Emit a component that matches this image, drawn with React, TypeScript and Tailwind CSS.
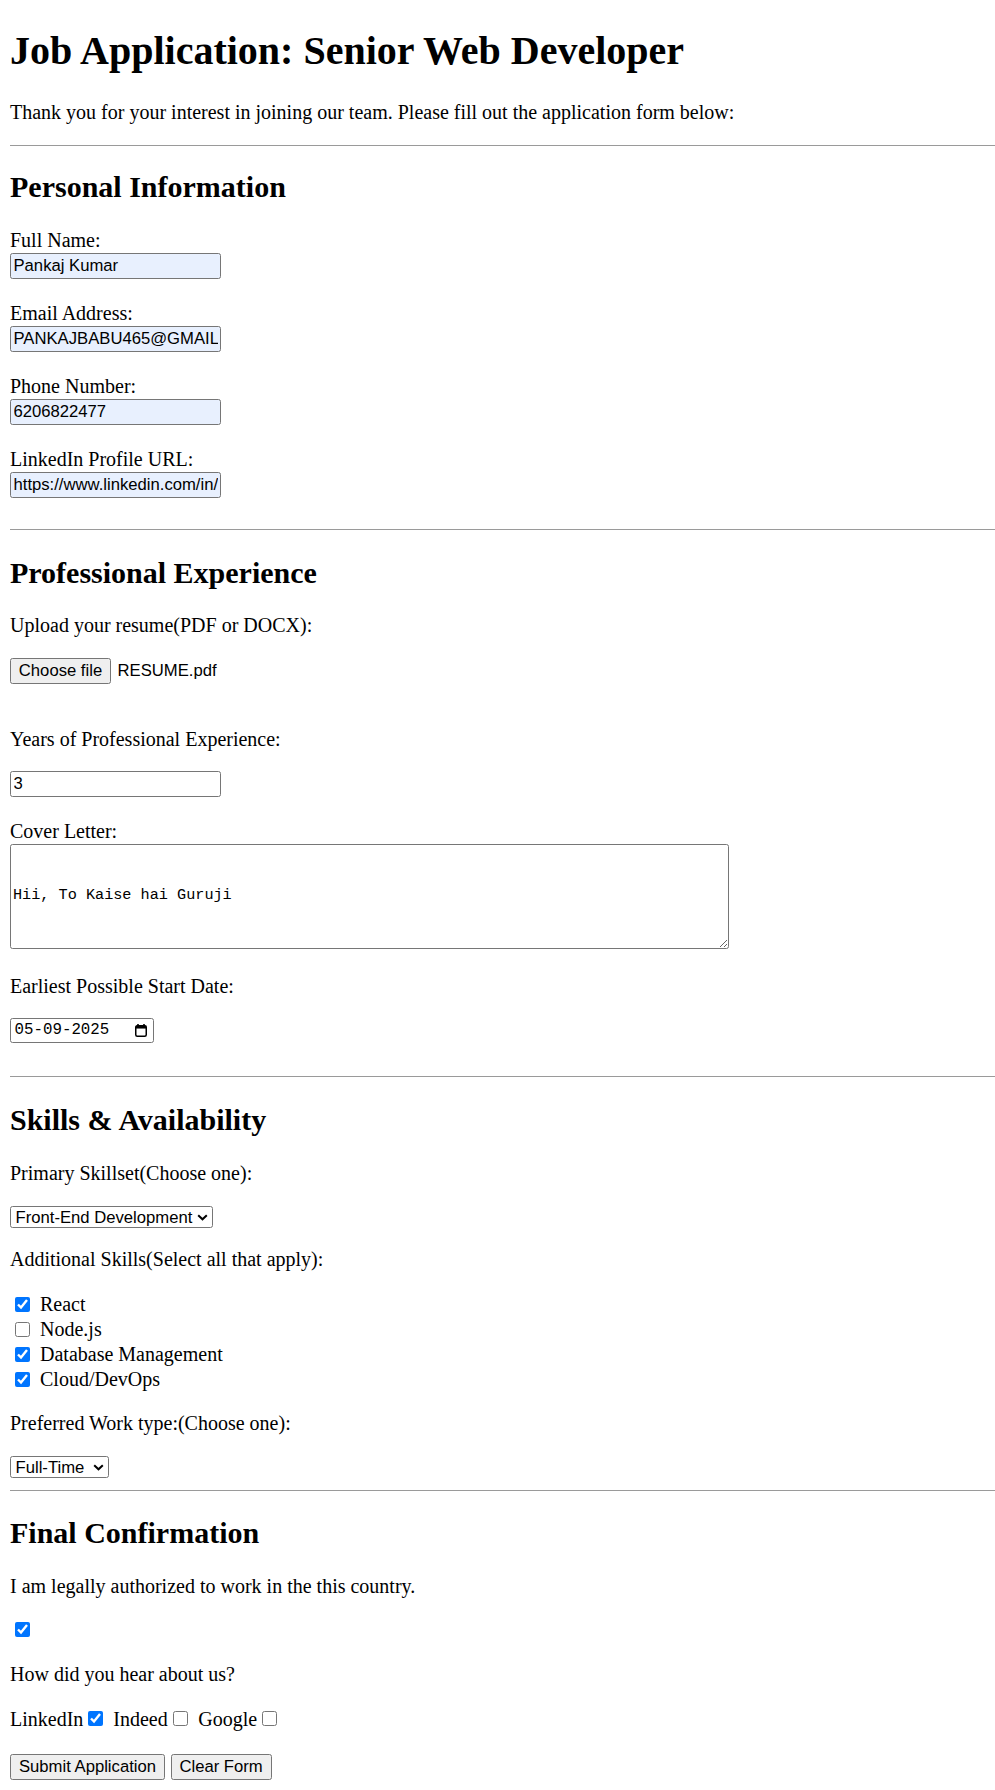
const sans = "font-['Liberation_Sans',Arial,sans-serif] text-[16.67px] leading-[normal] text-black";
const field = `block h-[26px] w-[211px] rounded-[2.5px] border border-[#767676] px-[2.5px] ${sans}`;
const btn = `h-[26px] rounded-[2.5px] border border-[#767676] bg-[#efefef] ${sans}`;
const check = "h-[15px] w-[15px] m-0 accent-[#0075ff]";
const selectCls = `block h-[22px] w-full appearance-none rounded-[2.5px] border border-[#767676] bg-white pl-[4.5px] ${sans}`;

function CalendarIcon() {
  return (
    <svg width="12" height="13" viewBox="0 0 12 13" className="mr-[6px]">
      <rect x="2.2" y="0" width="1.6" height="2.5" fill="#000" />
      <rect x="8.2" y="0" width="1.6" height="2.5" fill="#000" />
      <rect x="0.75" y="1.75" width="10.5" height="10.5" rx="1.5" fill="none" stroke="#000" strokeWidth="1.5" />
      <rect x="0.75" y="1.75" width="10.5" height="2.8" fill="#000" />
    </svg>
  );
}

function Chevron() {
  return (
    <svg
      width="11"
      height="7"
      viewBox="0 0 11 7"
      className="pointer-events-none absolute right-[5px] top-[8px]"
    >
      <path d="M1.2 1.2 L5.5 5.3 L9.8 1.2" fill="none" stroke="#000" strokeWidth="2" />
    </svg>
  );
}

const personal = [
  { label: "Full Name:", value: "Pankaj Kumar" },
  { label: "Email Address:", value: "PANKAJBABU465@GMAIL.COM" },
  { label: "Phone Number:", value: "6206822477" },
  { label: "LinkedIn Profile URL:", value: "https://www.linkedin.com/in/pankaj-kumar" },
];

const skills = [
  { name: "React", on: true },
  { name: "Node.js", on: false },
  { name: "Database Management", on: true },
  { name: "Cloud/DevOps", on: true },
];

export default function App() {
  return (
    <div className="min-h-[1790px] bg-white pl-[10px] font-['Liberation_Serif','Times_New_Roman',serif] text-[20px] leading-[normal] text-black">
      <h1 className="pt-[26.8px] text-[40px] font-bold leading-[normal]">Job Application: Senior Web Developer</h1>
      <p className="mt-[27px]">
        Thank you for your interest in joining our team. Please fill out the application form below:
      </p>
      <hr className="mt-[21px] h-0 border-t border-[#9a9a9a]" />

      {/* Personal */}
      <h2 className="mt-[24px] text-[30px] font-bold leading-[normal]">Personal Information</h2>
      {personal.map((f, i) => (
        <div key={f.label} className={i === 0 ? "mt-[25px]" : "mt-[22.5px]"}>
          <label className="block">{f.label}</label>
          <input type="text" readOnly defaultValue={f.value} className={`${field} mt-[1.5px] bg-[#e8f0fe]`} />
        </div>
      ))}
      <hr className="mt-[31px] h-0 border-t border-[#9a9a9a]" />

      {/* Professional */}
      <h2 className="mt-[26px] text-[30px] font-bold leading-[normal]">Professional Experience</h2>
      <p className="mt-[23.5px]">Upload your resume(PDF or DOCX):</p>
      <div className="mt-[21.5px] flex items-center">
        <button type="button" className={`${btn} w-[101px]`}>Choose file</button>
        <span className={`ml-[6.5px] ${sans}`}>RESUME.pdf</span>
      </div>
      <p className="mt-[43.4px]">Years of Professional Experience:</p>
      <input type="text" readOnly defaultValue="3" className={`${field} mt-[20.6px] bg-white`} />
      <label className="mt-[23px] block">Cover Letter:</label>
      <textarea
        readOnly
        defaultValue={"\n\nHii, To Kaise hai Guruji"}
        className="mt-[0.5px] block h-[105px] w-[719px] rounded-[2.5px] border border-[#767676] bg-white px-[2px] pt-[2.5px] font-['Liberation_Mono','Courier_New',monospace] text-[15.2px] leading-[19.5px] text-black"
      />
      <p className="mt-[26.2px]">Earliest Possible Start Date:</p>
      <div className="mt-[20px] flex h-[25px] w-[144px] items-center justify-between rounded-[2.5px] border border-[#767676] pl-[3.5px]">
        <span className="font-['Liberation_Mono','Courier_New',monospace] text-[15.8px] leading-[normal]">05-09-2025</span>
        <CalendarIcon />
      </div>
      <hr className="mt-[33.4px] h-0 border-t border-[#9a9a9a]" />

      {/* Skills */}
      <h2 className="mt-[25.5px] text-[30px] font-bold leading-[normal]">Skills &amp; Availability</h2>
      <p className="mt-[24.8px]">Primary Skillset(Choose one):</p>
      <div className="relative mt-[21.4px] w-[203px]">
        <select defaultValue="fe" className={selectCls}>
          <option value="fe">Front-End Development</option>
          <option value="be">Back-End Development</option>
          <option value="fs">Full-Stack Development</option>
        </select>
        <Chevron />
      </div>
      <p className="mt-[20.3px]">Additional Skills(Select all that apply):</p>
      <div className="mt-[21px]">
        {skills.map((s) => (
          <div key={s.name} className="flex h-[25px] items-center">
            <input type="checkbox" defaultChecked={s.on} className={`${check} ml-[5px]`} />
            <span className="ml-[10px]">{s.name}</span>
          </div>
        ))}
      </div>
      <p className="mt-[19.6px]">Preferred Work type:(Choose one):</p>
      <div className="relative mt-[21.4px] w-[99px]">
        <select defaultValue="ft" className={selectCls}>
          <option value="ft">Full-Time</option>
          <option value="pt">Part-Time</option>
          <option value="ct">Contract</option>
        </select>
        <Chevron />
      </div>
      <hr className="mt-[11.5px] h-0 border-t border-[#9a9a9a]" />

      {/* Final */}
      <h2 className="mt-[25px] text-[30px] font-bold leading-[normal]">Final Confirmation</h2>
      <p className="mt-[24.7px]">I am legally authorized to work in the this country.</p>
      <div className="mt-[19.3px] flex h-[25px] items-center">
        <input type="checkbox" defaultChecked className={`${check} ml-[5px]`} />
      </div>
      <p className="mt-[21px]">How did you hear about us?</p>
      <div className="mt-[21.7px] flex h-[23px] items-end">
        <span>LinkedIn</span>
        <input type="checkbox" defaultChecked className={`${check} mb-[4.7px] ml-[5px]`} />
        <span className="ml-[10px]">Indeed</span>
        <input type="checkbox" className={`${check} mb-[4.7px] ml-[5.5px]`} />
        <span className="ml-[10px]">Google</span>
        <input type="checkbox" className={`${check} mb-[4.7px] ml-[5px]`} />
      </div>
      <div className="mt-[23.5px] flex">
        <button type="button" className={`${btn} w-[155px]`}>Submit Application</button>
        <button type="button" className={`${btn} ml-[5.6px] w-[101px]`}>Clear Form</button>
      </div>
    </div>
  );
}
